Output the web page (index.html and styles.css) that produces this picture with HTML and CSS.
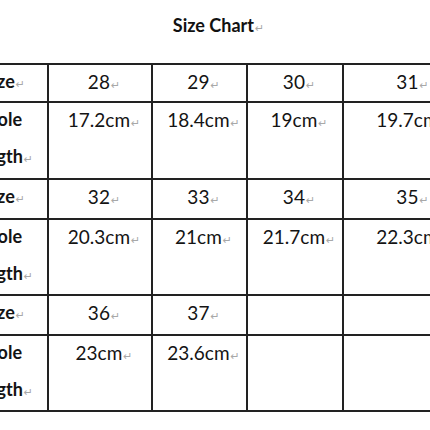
FILE: index.html
```html
<!DOCTYPE html>
<html>
<head>
<meta charset="utf-8">
<link rel="stylesheet" href="styles.css">
</head>
<body>
<h1 class="title">Size Chart<span class="pm">↵</span></h1>
<table class="chart">
  <colgroup>
    <col class="col-label"><col class="col-a"><col class="col-b"><col class="col-c"><col class="col-d">
  </colgroup>
  <tr class="row-size">
    <th><div class="lbl lbl-size">Size<span class="pm">↵</span></div></th>
    <td><div class="v">28<span class="pm">↵</span></div></td>
    <td><div class="v">29<span class="pm">↵</span></div></td>
    <td><div class="v">30<span class="pm">↵</span></div></td>
    <td><div class="v">31<span class="pm">↵</span></div></td>
  </tr>
  <tr class="row-len">
    <th><div class="lbl lbl-sole">Sole</div><div class="lbl lbl-length">Length<span class="pm">↵</span></div></th>
    <td><div class="v">17.2cm<span class="pm">↵</span></div></td>
    <td><div class="v">18.4cm<span class="pm">↵</span></div></td>
    <td><div class="v">19cm<span class="pm">↵</span></div></td>
    <td><div class="v">19.7cm<span class="pm">↵</span></div></td>
  </tr>
  <tr class="row-size2">
    <th><div class="lbl lbl-size">Size<span class="pm">↵</span></div></th>
    <td><div class="v">32<span class="pm">↵</span></div></td>
    <td><div class="v">33<span class="pm">↵</span></div></td>
    <td><div class="v">34<span class="pm">↵</span></div></td>
    <td><div class="v">35<span class="pm">↵</span></div></td>
  </tr>
  <tr class="row-len2">
    <th><div class="lbl lbl-sole">Sole</div><div class="lbl lbl-length">Length<span class="pm">↵</span></div></th>
    <td><div class="v">20.3cm<span class="pm">↵</span></div></td>
    <td><div class="v">21cm<span class="pm">↵</span></div></td>
    <td><div class="v">21.7cm<span class="pm">↵</span></div></td>
    <td><div class="v">22.3cm<span class="pm">↵</span></div></td>
  </tr>
  <tr class="row-size2">
    <th><div class="lbl lbl-size">Size<span class="pm">↵</span></div></th>
    <td><div class="v">36<span class="pm">↵</span></div></td>
    <td><div class="v">37<span class="pm">↵</span></div></td>
    <td></td>
    <td></td>
  </tr>
  <tr class="row-len2">
    <th><div class="lbl lbl-sole">Sole</div><div class="lbl lbl-length">Length<span class="pm">↵</span></div></th>
    <td><div class="v">23cm<span class="pm">↵</span></div></td>
    <td><div class="v">23.6cm<span class="pm">↵</span></div></td>
    <td></td>
    <td></td>
  </tr>
</table>
</body>
</html>
```
FILE: styles.css
```css
html, body {
  margin: 0;
  padding: 0;
  background: #ffffff;
  overflow: hidden;
}

body {
  width: 430px;
  height: 430px;
  font-family: Lato, "Open Sans", sans-serif;
  color: #141414;
}

.title {
  margin: 0 0 13px 0;
  font-size: 18px;
  font-weight: 700;
  line-height: 50px;
  text-align: center;
  color: #111;
  padding-right: 2px;
}

.pm {
  font-family: "DejaVu Sans", sans-serif;
  font-size: 11px;
  font-weight: 400;
  line-height: 1;
  color: #a8a8a8;
  margin-left: 1px;
  margin-right: -9px;
}

.chart {
  border-collapse: collapse;
  table-layout: fixed;
  margin-left: -41px;
  width: 514px;
}

.col-label { width: 88px; }
.col-a { width: 104px; }
.col-b { width: 95px; }
.col-c { width: 96px; }
.col-d { width: 131px; }

.chart th,
.chart td {
  border: 2px solid #222;
  padding: 0;
  vertical-align: top;
  font-size: 19px;
  line-height: 37px;
}

.row-size { height: 38px; }
.row-len { height: 77px; }
.row-size2 { height: 40px; }
.row-len2 { height: 76px; }

.chart td {
  text-align: center;
  font-weight: 400;
}

.v {
  margin-top: -2px;
  padding-right: 1px;
}

.chart th {
  text-align: right;
  font-weight: 700;
  font-size: 18px;
}

.lbl-size {
  margin-top: -2px;
  padding-right: 31px;
}

.lbl-sole {
  margin-top: -2px;
  padding-right: 25px;
}

.lbl-length {
  padding-right: 23px;
}
```
